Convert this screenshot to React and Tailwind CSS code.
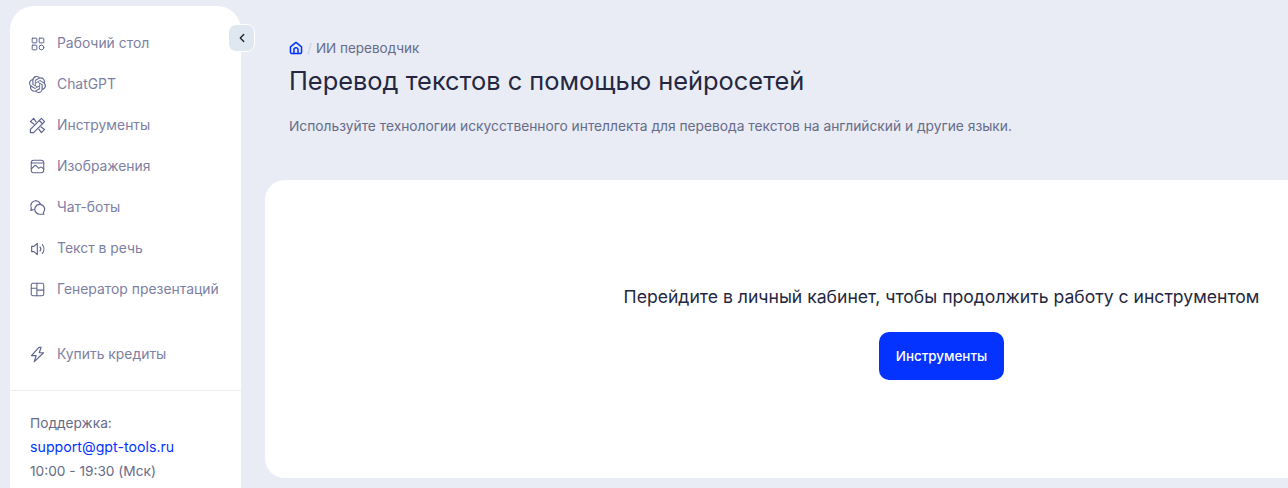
import { ChevronLeft } from 'lucide-react';

const iconProps = {
    viewBox: '0 0 24 24',
    fill: 'none',
    stroke: 'currentColor',
    strokeWidth: 1.7,
    strokeLinecap: 'round',
    strokeLinejoin: 'round',
};

const DesktopIcon = () => (
    <svg {...iconProps} width={14} height={14}>
        <rect x="2" y="2" width="8" height="8" rx="1" />
        <rect x="14" y="2" width="8" height="8" rx="1" />
        <rect x="2" y="14" width="8" height="8" rx="1" />
        <circle cx="18" cy="18" r="4" />
    </svg>
);

const GptIcon = () => (
    <svg width={17} height={17} viewBox="0 0 24 24" fill="currentColor">
        <path d="M22.28 9.82a5.98 5.98 0 0 0-.52-4.91 6.05 6.05 0 0 0-6.51-2.9A6.07 6.07 0 0 0 4.98 4.18a5.98 5.98 0 0 0-4 2.9 6.05 6.05 0 0 0 .74 7.1 5.98 5.98 0 0 0 .51 4.91 6.05 6.05 0 0 0 6.52 2.9A5.98 5.98 0 0 0 13.26 24a6.06 6.06 0 0 0 5.77-4.21 5.99 5.99 0 0 0 4-2.9 6.06 6.06 0 0 0-.75-7.07zM13.26 22.43a4.48 4.48 0 0 1-2.88-1.04l.14-.08 4.78-2.76a.79.79 0 0 0 .39-.68v-6.74l2.02 1.17a.07.07 0 0 1 .04.05v5.58a4.5 4.5 0 0 1-4.49 4.5zM3.6 18.3a4.47 4.47 0 0 1-.54-3.01l.14.09 4.78 2.76a.77.77 0 0 0 .78 0l5.84-3.37v2.33a.08.08 0 0 1-.03.06L9.74 19.95a4.5 4.5 0 0 1-6.14-1.65zM2.34 7.9a4.49 4.49 0 0 1 2.37-1.97v5.68a.77.77 0 0 0 .39.68l5.81 3.35-2.02 1.17a.08.08 0 0 1-.07 0l-4.83-2.79A4.5 4.5 0 0 1 2.34 7.87zm16.6 3.86L13.1 8.36l2.02-1.16a.08.08 0 0 1 .07 0l4.83 2.79a4.49 4.49 0 0 1-.68 8.1v-5.68a.79.79 0 0 0-.4-.67zm2.01-3.02l-.14-.09-4.77-2.78a.78.78 0 0 0-.79 0L9.41 9.23V6.9a.07.07 0 0 1 .03-.06l4.83-2.79a4.5 4.5 0 0 1 6.68 4.66zM8.31 12.86l-2.02-1.16a.08.08 0 0 1-.04-.06V6.07a4.5 4.5 0 0 1 7.38-3.45l-.14.08L8.7 5.46a.79.79 0 0 0-.39.68zm1.1-2.37l2.6-1.5 2.61 1.5v3l-2.6 1.5-2.6-1.5z" />
    </svg>
);

// two bars crossed
const ToolsIcon = () => (
    <svg {...iconProps} width={17} height={17}>
        <path d="M17.500 2 22 6.500 6.500 22 2 22 2 17.500z" />
        <path d="M10 7 6.500 2 2 6.500 7 10" />
        <path d="M14 17l3.500 5 4.500-4.500L17 14" />
        <path d="M14.500 5 19 9.500" />
    </svg>
);

const ImageIcon = () => (
    <svg {...iconProps} width={15} height={15}>
        <rect x="2" y="2" width="20" height="20" rx="4" />
        <path d="M2 6.500h20" />
        <path d="M2 16l5-5c1-1 2-1 3 0l4 4 2-1.500c1-.7 2-.7 3 0l3 2.500" />
    </svg>
);

const ChatIcon = () => (
    <svg {...iconProps} width={17} height={17}>
        <path d="M9.500 2.500a7 7 0 0 0-6.300 10c.2.500.2 1-.7 3.500l3.500-.9" />
        <path d="M9.500 2.500a7 7 0 0 1 6.500 4.500" />
        <path d="M15.500 7.500a6.800 6.800 0 0 1 4.800 11.300c-.3.500-.1 1 .7 2.700h-6a6.800 6.800 0 0 1-6-10 6.800 6.800 0 0 1 6.500-4z" />
    </svg>
);

const SpeechIcon = () => (
    <svg {...iconProps} width={16} height={16}>
        <path d="M11 3.500v17l-5-4.500H2.500V8H6z" />
        <path d="M15 9a4.500 4.500 0 0 1 0 6" />
        <path d="M18.500 5.500a10 10 0 0 1 0 13" />
    </svg>
);

const SlidesIcon = () => (
    <svg {...iconProps} width={15} height={15}>
        <rect x="2" y="2" width="20" height="20" rx="3" />
        <path d="M11 2v20M2 10h9M11 13h11" />
    </svg>
);

const BoltIcon = () => (
    <svg {...iconProps} width={17} height={17}>
        <path d="M14 2 3.500 13.500H10L7.500 22 20.500 9.500H14.500L17 2z" />
    </svg>
);

const HomeIcon = () => (
    <svg width={14} height={14} viewBox="0 0 24 24" fill="none" stroke="#0433ff" strokeWidth={2.6} strokeLinecap="round" strokeLinejoin="round">
        <path d="M2.500 10 12 2.500 21.500 10v9a2.500 2.500 0 0 1-2.500 2.500H5A2.500 2.500 0 0 1 2.500 19z" />
        <path d="M8.500 21.500V15a3.500 3.500 0 0 1 7 0v6.500" />
    </svg>
);

const menu = [
    { title: 'Рабочий стол', icon: <DesktopIcon /> },
    { title: 'ChatGPT', icon: <GptIcon /> },
    { title: 'Инструменты', icon: <ToolsIcon /> },
    { title: 'Изображения', icon: <ImageIcon /> },
    { title: 'Чат-боты', icon: <ChatIcon /> },
    { title: 'Текст в речь', icon: <SpeechIcon /> },
    { title: 'Генератор презентаций', icon: <SlidesIcon /> },
];

function MenuItem({ title, icon }) {
    return (
        <div className="flex items-center h-[41px] pl-[19px] text-[#7d80a3]">
            <span className="w-[17px] flex justify-center shrink-0 text-[#5f648f]">{icon}</span>
            <span className="ml-[11px] text-[13.9px] whitespace-nowrap">{title}</span>
        </div>
    );
}

export default function App() {
    return (
        <div className="h-[488px] w-[1288px] overflow-hidden bg-[#e9ecf4] flex font-['Inter',sans-serif]">
            {/* Sidebar */}
            <aside className="relative w-[231px] ml-[10px] mt-[6px] shrink-0 bg-white rounded-t-[24px] pt-[17px]">
                <button className="absolute top-[18px] -right-[14px] w-[27px] h-[28px] rounded-lg bg-[#dfe7f1] border border-white flex items-center justify-center text-[#1a1c2e]">
                    <ChevronLeft size={14} strokeWidth={2.2} />
                </button>

                {menu.map((item) => (
                    <MenuItem key={item.title} title={item.title} icon={item.icon} />
                ))}

                <div className="mt-6">
                    <MenuItem title="Купить кредиты" icon={<BoltIcon />} />
                </div>

                <div className="mt-[15px] border-t border-[#eceef3] pt-5 pl-5 text-[13.7px] leading-6 text-[#666b8a]">
                    <div>Поддержка:</div>
                    <div className="text-[14.2px] text-[#0433ff]">support@gpt-tools.ru</div>
                    <div>10:00 - 19:30 (Мск)</div>
                </div>
            </aside>

            {/* Content */}
            <main className="ml-6 shrink-0">
                <div className="pl-6 pt-[38px] h-[180px]">
                    <div className="flex items-center h-5 text-[13.5px] text-[#666b8a]">
                        <HomeIcon />
                        <span className="mx-1 text-[#c9d3e6]">/</span>
                        <span>ИИ переводчик</span>
                    </div>
                    <h1 className="mt-[6px] text-[25.4px] leading-[34px] font-normal text-[#24273f]">
                        Перевод текстов с помощью нейросетей
                    </h1>
                    <p className="mt-[18px] text-[13.77px] leading-5 text-[#666b8a]">
                        Используйте технологии искусственного интеллекта для перевода текстов на английский и другие языки.
                    </p>
                </div>

                <div className="w-[1353px] h-[298px] bg-white rounded-[20px] flex flex-col items-center pt-[105px]">
                    <p className="text-[17.6px] leading-6 font-normal text-[#24273f]">
                        Перейдите в личный кабинет, чтобы продолжить работу с инструментом
                    </p>
                    <button className="mt-[23px] w-[125px] h-12 rounded-[10px] bg-[#0433ff] text-white text-[13.4px] font-medium">
                        Инструменты
                    </button>
                </div>
            </main>
        </div>
    );
}
